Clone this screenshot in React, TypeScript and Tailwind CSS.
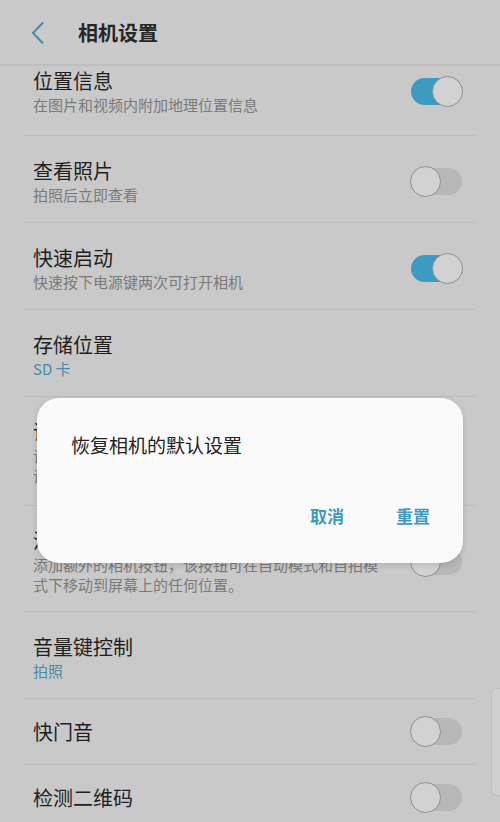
import React from "react";

type RowProps = {
  title: string;
  subtitle?: string;
  blue?: boolean;
  toggle?: "on" | "off";
  pt?: string;
  pb?: string;
};

function Toggle({ on }: { on: boolean }) {
  return (
    <div className="relative w-[53px] h-[31px] shrink-0">
      <div
        className={
          "absolute top-[2px] bottom-[2px] rounded-full " +
          (on ? "left-[1px] right-[8px] bg-[#3d9bc2]" : "left-[8px] right-[1px] bg-[#b7b7b7]")
        }
      />
      <div
        className={
          "absolute top-0 w-[31px] h-[31px] rounded-full bg-[#d2d2d2] border-[1.5px] border-[#8f8f8f] " +
          (on ? "right-0" : "left-0")
        }
      />
    </div>
  );
}

function Row({ title, subtitle, blue, toggle, pt = "pt-[22px]", pb = "pb-[17px]" }: RowProps) {
  return (
    <div className="mx-6 mr-[25px] border-b border-[#bcbcbc]">
      <div className={"flex items-center justify-between pl-[9px] pr-[12px] " + pt + " " + pb}>
        <div className="flex flex-col">
          <div className="text-[20px] leading-[26px] text-[#1f1f1f]">{title}</div>
          {subtitle && (
            <div
              className={
                "mt-px text-[15px] leading-[20px] max-w-[356px] " +
                (blue ? "text-[#4a8aa6]" : "text-[#7a7a7a]")
              }
            >
              {subtitle}
            </div>
          )}
        </div>
        {toggle && <Toggle on={toggle === "on"} />}
      </div>
    </div>
  );
}

export default function App() {
  return (
    <div
      className="relative w-[500px] h-[822px] overflow-hidden bg-[#c9c9c9]"
      style={{ fontFamily: '"Noto Sans CJK SC", "Noto Sans", sans-serif' }}
    >
      <div className="h-[66px] flex items-center bg-[#cacaca] border-b-2 border-[#bfbfbf]">
        <svg width="14" height="24" viewBox="0 0 14 24" className="ml-[31px] mt-[2px]">
          <polyline points="12,1.5 2,12 12,22.5" fill="none" stroke="#4a8aa6" strokeWidth="2" />
        </svg>
        <div className="ml-[33px] text-[20px] font-bold leading-none text-[#262626] mt-[2px]">相机设置</div>
      </div>

      <Row title="位置信息" subtitle="在图片和视频内附加地理位置信息" toggle="on" pt="pt-[2px]" pb="pb-[20px]" />
      <Row title="查看照片" subtitle="拍照后立即查看" toggle="off" />
      <Row title="快速启动" subtitle="快速按下电源键两次可打开相机" toggle="on" />
      <Row title="存储位置" subtitle="SD 卡" blue />
      <Row
        title="语音控制"
        subtitle="说出“微笑”、“茄子”、“拍摄”或“拍照”拍照，或说“录制视频”录制视频。"
        toggle="off"
        pb="pb-[19px]"
      />
      <Row
        title="浮动相机按钮"
        subtitle="添加额外的相机按钮，该按钮可在自动模式和自拍模式下移动到屏幕上的任何位置。"
        toggle="off"
        pb="pb-[16px]"
      />
      <Row title="音量键控制" subtitle="拍照" blue />
      <Row title="快门音" toggle="off" pt="pt-[17px]" pb="pb-[17px]" />
      <Row title="检测二维码" toggle="off" pt="pt-[17px]" pb="pb-[17px]" />

      <div className="absolute right-0 top-[688px] w-[9px] h-[108px] rounded-l-[6px] bg-[#cfcfcf] border border-r-0 border-[#c0c0c0]" />

      <div className="absolute left-[37px] top-[398px] w-[426px] h-[165px] rounded-[22px] bg-[#fafafa] shadow-[0_2px_6px_rgba(0,0,0,0.12)] flex flex-col">
        <div className="pl-[34px] pt-[33px] text-[19px] leading-[28px] text-[#222]">恢复相机的默认设置</div>
        <div className="flex justify-end gap-[52px] pr-[33px] mt-[45px]">
          <span className="text-[17px] font-bold leading-[24px] text-[#3d9bc2]">取消</span>
          <span className="text-[17px] font-bold leading-[24px] text-[#3d9bc2]">重置</span>
        </div>
      </div>
    </div>
  );
}
